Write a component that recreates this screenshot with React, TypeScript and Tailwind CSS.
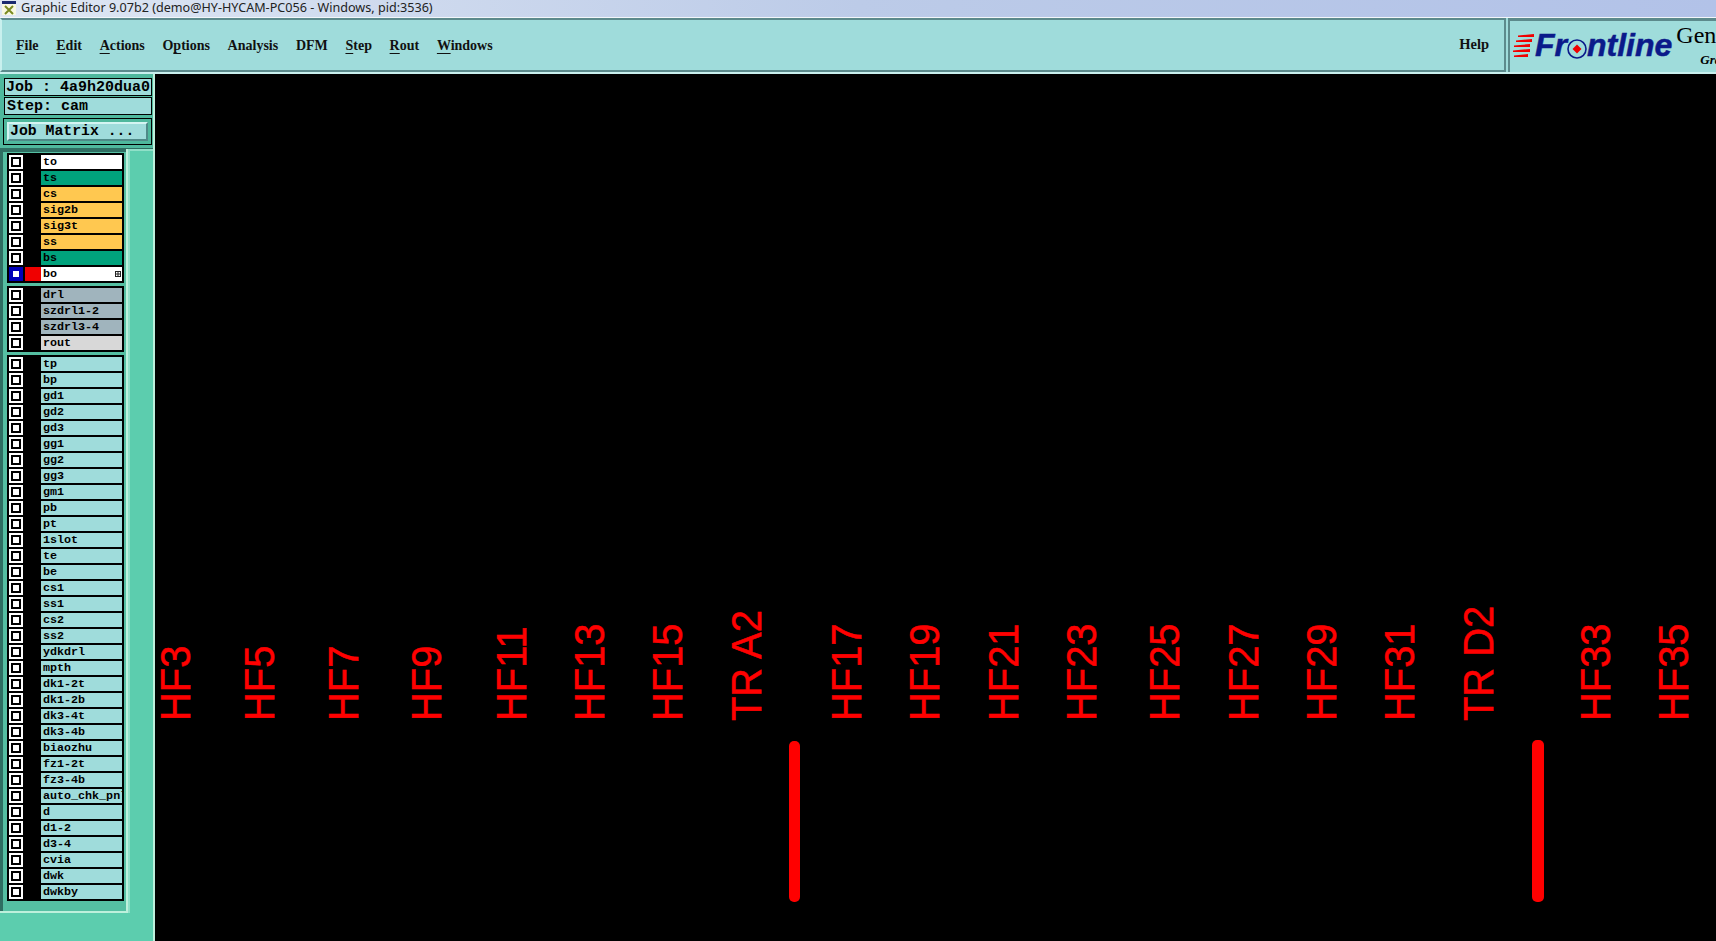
const menus: { before: string; key?: string; after?: string }[] = [
  { before: "", key: "F", after: "ile" },
  { before: "", key: "E", after: "dit" },
  { before: "", key: "A", after: "ctions" },
  { before: "O", key: "p", after: "tions" },
  { before: "Analysis" },
  { before: "DFM" },
  { before: "", key: "S", after: "tep" },
  { before: "", key: "R", after: "out" },
  { before: "", key: "W", after: "indows" },
];

const green = "bg-[#00a27c]";
const orange = "bg-[#ffc850]";
const slate = "bg-[#a0b4bd]";
const aqua = "bg-[#9fdcdb]";

const boardLayers = [
  { name: "to", color: "bg-white" },
  { name: "ts", color: green },
  { name: "cs", color: orange },
  { name: "sig2b", color: orange },
  { name: "sig3t", color: orange },
  { name: "ss", color: orange },
  { name: "bs", color: green },
  { name: "bo", color: "bg-white", active: true },
];

const drillLayers = [
  { name: "drl", color: slate },
  { name: "szdrl1-2", color: slate },
  { name: "szdrl3-4", color: slate },
  { name: "rout", color: "bg-[#d8d8d8]" },
];

const miscLayers = [
  "tp", "bp", "gd1", "gd2", "gd3", "gg1", "gg2", "gg3", "gm1", "pb", "pt", "1slot",
  "te", "be", "cs1", "ss1", "cs2", "ss2", "ydkdrl", "mpth", "dk1-2t", "dk1-2b",
  "dk3-4t", "dk3-4b", "biaozhu", "fz1-2t", "fz3-4b", "auto_chk_pnl", "d", "d1-2",
  "d3-4", "cvia", "dwk", "dwkby",
].map((name) => ({ name, color: aqua }));

// left edge of each rotated label on the board, in page pixels
const labels: [string, number][] = [
  ["HF3", 160], ["HF5", 244], ["HF7", 328], ["HF9", 411], ["HF11", 496], ["HF13", 574],
  ["HF15", 652], ["TR A2", 731], ["HF17", 831], ["HF19", 909], ["HF21", 988], ["HF23", 1066],
  ["HF25", 1149], ["HF27", 1228], ["HF29", 1306], ["HF31", 1384], ["TR D2", 1463],
  ["HF33", 1580], ["HF35", 1658],
];

type Layer = { name: string; color: string; active?: boolean };

function LayerRow({ layer }: { layer: Layer }) {
  return (
    <div className="flex h-[14px]">
      <div className={`ml-[2px] flex h-[14px] w-[14px] items-center justify-center ${layer.active ? "bg-[#0000b8]" : "bg-white"}`}>
        <div className={`h-[10px] w-[10px] border-2 ${layer.active ? "border-[#0000b8] bg-white" : "border-black bg-white"}`} />
      </div>
      <div className={`ml-[2px] h-[14px] w-[16px] ${layer.active ? "bg-[#f00000]" : "bg-black"}`} />
      <div className={`relative w-[81px] overflow-hidden pl-[2px] text-[11.7px] leading-[14px] font-bold whitespace-nowrap text-black ${layer.color}`}>
        {layer.name}
        {layer.active && (
          <svg className="absolute top-[4px] right-px" width="6" height="6" viewBox="0 0 6 6">
            <rect x="0.5" y="0.5" width="5" height="5" fill="none" stroke="#222" />
            <path d="M3 1V5M1 3H5" stroke="#222" />
          </svg>
        )}
      </div>
    </div>
  );
}

function LayerGroup({ layers }: { layers: Layer[] }) {
  return (
    <div className="flex w-[117px] flex-col gap-[2px] bg-black py-[2px]">
      {layers.map((layer) => (
        <LayerRow key={layer.name} layer={layer} />
      ))}
    </div>
  );
}

function Sidebar() {
  return (
    <aside className="flex w-[155px] shrink-0 flex-col border-r-2 border-[#bdf0dc] bg-[#4fb89d] font-['Liberation_Mono',monospace] text-black">
      {/* Job info */}
      <div className="flex flex-col gap-px pt-[4px] pr-[1px] pl-[4px]">
        <div className="h-[18px] border border-black bg-[#9fdcdb] pt-px pl-[1px] text-[15px] leading-[15px] font-bold whitespace-nowrap">
          Job : 4a9h20dua0
        </div>
        <div className="h-[18px] border border-black bg-[#9fdcdb] pt-px pl-[2px] text-[15px] leading-[15px] font-bold">
          Step: cam
        </div>
      </div>
      <div className="mt-[3px] mr-[1px] ml-[3px] border border-black p-[3px] pb-[3px]">
        <div className="h-[19px] border-2 border-t-[#d4f5f2] border-r-[#4f8a88] border-b-[#4f8a88] border-l-[#d4f5f2] bg-[#9fdcdb] pl-[1px] text-[14.8px] leading-[15px] font-bold">
          Job Matrix ...
        </div>
      </div>

      {/* Layer list and scrollbar */}
      <div className="mt-[3px] flex flex-1 items-start border-t border-[#2f6e62] bg-[#5ccdae]">
        <div className="flex h-[764px] flex-col gap-[3px] border-r-2 border-b-2 border-[#bdf0dc] bg-[#55bfa2] pt-[4px] pr-[2px] pl-[7px] shadow-[inset_3px_3px_0_#2f6e62]">
          <LayerGroup layers={boardLayers} />
          <LayerGroup layers={drillLayers} />
          <LayerGroup layers={miscLayers} />
        </div>
        <div className="h-[764px] flex-1 border-t-2 border-l-2 border-[#8fe0c8]" />
      </div>
    </aside>
  );
}

function FrontlineLogo() {
  return (
    <div className="flex shrink-0 items-center pt-[8px] pl-[3px]">
      <svg width="22" height="23" viewBox="0 0 22 23" className="shrink-0">
        <path
          d="M5 1.5L21 0V3H5Z M3 6.5L19 5V8H3Z M1 11.5L17 10V13H1Z M0 16.5L17 15V18H0Z M1 21.5L15 20V23H1Z"
          fill="#f00000"
        />
      </svg>
      <span className="font-['Liberation_Sans',sans-serif] text-[32px] leading-none font-bold text-[#0b1a8a] italic [-webkit-text-stroke:0.5px_#0b1a8a]">Fr</span>
      <svg width="20" height="20" viewBox="0 0 20 20" className="mt-[7px] shrink-0">
        <circle cx="10" cy="10" r="9" fill="none" stroke="#0b1a8a" strokeWidth="1.6" />
        <path d="M10 5.5L14.5 10L10 14.5L5.5 10Z" fill="#f00000" />
      </svg>
      <span className="font-['Liberation_Sans',sans-serif] text-[32px] leading-none font-bold text-[#0b1a8a] italic [-webkit-text-stroke:0.5px_#0b1a8a]">ntline</span>
    </div>
  );
}

function Board() {
  return (
    <main className="relative flex-1 bg-black">
      <svg className="block h-full w-full" viewBox="155 74 1561 867">
        {labels.map(([text, x]) => (
          <text
            key={text}
            transform={`translate(${x + 30} 721) rotate(-90) scale(0.95 1)`}
            fontFamily="Liberation Sans, sans-serif"
            fontSize="42"
            fill="#ff0000"
            stroke="#ff0000"
            strokeWidth="0.5"
          >
            {text}
          </text>
        ))}
        <rect x="789" y="741" width="11" height="161" rx="5" fill="#ff0000" />
        <rect x="1532" y="740" width="12" height="162" rx="5" fill="#ff0000" />
      </svg>
    </main>
  );
}

export default function App() {
  return (
    <div className="flex h-[941px] w-[1716px] flex-col overflow-hidden bg-black">
      {/* Window title bar */}
      <div className="flex h-[18px] shrink-0 items-center gap-[5px] border-b border-[#f2f6fa] bg-gradient-to-r from-[#dfe7f3] via-[#bccbe8] to-[#b2c2e8] pb-px pl-[2px] font-['Noto_Sans',sans-serif] text-[12.6px] leading-none text-[#222]">
        <svg width="14" height="14" viewBox="0 0 14 14" className="shrink-0">
          <rect width="14" height="14" fill="#f8f8e0" />
          <rect width="14" height="3" fill="#1a2a70" />
          <path d="M3 5L11 13M11 5L3 13" stroke="#7a8a20" strokeWidth="2" />
        </svg>
        <span className="whitespace-nowrap">Graphic Editor 9.07b2 (demo@HY-HYCAM-PC056 - Windows, pid:3536)</span>
      </div>

      {/* Menu bar */}
      <div className="flex h-[56px] shrink-0 border-b-2 border-[#c9f0ee] bg-[#9fdcdb] font-['Liberation_Serif',serif] text-[14px] font-bold text-[#111]">
        <div className="flex flex-1 items-center justify-between border-2 border-t-[#5c8a8c] border-r-[#5c8a8c] border-b-[#5c8a8c] border-l-[#c9f0ee] pr-[15px] pl-[14px]">
          <nav className="flex gap-[17.7px]">
            {menus.map((m) => (
              <span key={m.before + (m.key ?? "")} className="whitespace-nowrap">
                {m.before}
                {m.key && <span className="underline underline-offset-3">{m.key}</span>}
                {m.after}
              </span>
            ))}
          </nav>
          <span className="text-[14.5px]">Help</span>
        </div>
        <div className="ml-[2px] flex w-[208px] shrink-0 items-start overflow-hidden border-t-[3px] border-l-2 border-[#5c8a8c]">
          <FrontlineLogo />
          <div className="ml-[4px] min-w-0 flex-1 overflow-hidden whitespace-nowrap text-black">
            <div className="text-[24px] leading-[28px] font-normal">Genesis 2000</div>
            <div className="mt-[4px] pl-[24px] text-[13px] leading-none italic">Graphic Editor</div>
          </div>
        </div>
      </div>

      <div className="flex min-h-0 flex-1">
        <Sidebar />
        <Board />
      </div>
    </div>
  );
}
